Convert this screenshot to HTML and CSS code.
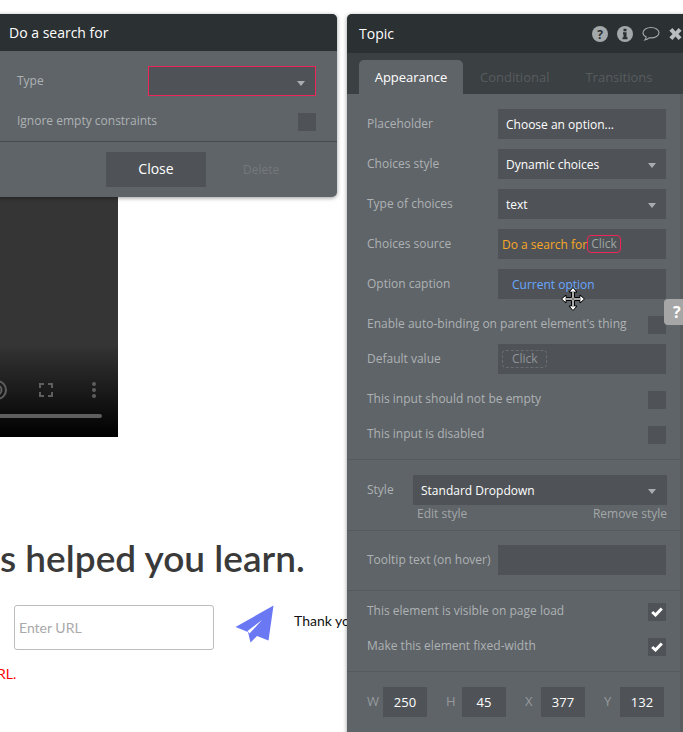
FILE: index.html
```html
<!DOCTYPE html>
<html lang="en">
<head>
<meta charset="utf-8">
<title>Topic</title>
<link rel="stylesheet" href="styles.css">
</head>
<body>
<div class="desktop">
  <div class="video">
    <div class="video-fade"></div>
    <svg class="video-controls" width="118" height="40" viewBox="0 0 118 40">
      <g fill="none" stroke="#5e5e5e">
        <circle cx="-3" cy="10" r="9" stroke-width="2"/>
        <circle cx="-3" cy="10" r="4.500" stroke-width="2"/>
        <path stroke-width="2" d="M40 8V4h4M48 4h4v4M52 12v4h-4M44 16h-4v-4"/>
      </g>
      <g fill="#5e5e5e">
        <circle cx="94" cy="4" r="2"/><circle cx="94" cy="10" r="2"/><circle cx="94" cy="16" r="2"/>
        <rect x="-4" y="34" width="106" height="4" rx="2"/>
      </g>
    </svg>
  </div>
  <h1 class="headline">s helped you learn.</h1>
  <input class="url-input" type="text" placeholder="Enter URL">
  <svg class="plane" width="40" height="40" viewBox="0 0 40 40">
    <path fill="#6a78f4" d="M38.500.5 33.500 35.500 22 31 15.500 37.500 13 27 .5 22z"/>
    <path fill="#fff" d="M27 15 12.500 26 14.500 28.500z"/>
  </svg>
  <p class="thanks">Thank you</p>
  <p class="error">RL.</p>

  <section class="window window-search">
    <header class="window-head window-head-search">Do a search for</header>
    <div class="search-fields">
      <div class="row row-search">
        <span class="label">Type</span>
        <div class="field field-type field-error"><i class="caret"></i></div>
      </div>
      <div class="row row-search row-ignore">
        <span class="label label-check">Ignore empty constraints</span>
        <span class="check"></span>
      </div>
    </div>
    <div class="search-actions">
      <button class="btn-close" type="button">Close</button>
      <span class="btn-delete">Delete</span>
    </div>
  </section>

  <section class="window window-props">
    <header class="window-head window-head-props">
      <span>Topic</span>
      <div class="head-icons">
        <svg width="16" height="16" viewBox="0 0 16 16"><circle cx="8" cy="8" r="8" fill="#a3a8ab"/><text x="8" y="12.500" class="icon-glyph">?</text></svg>
        <svg width="16" height="16" viewBox="0 0 16 16"><circle cx="8" cy="8" r="8" fill="#a3a8ab"/><path fill="#2b3033" d="M6.500 2.800h3v2.400h-3zM6 6.300h3.500v5H10.500v1.900h-5v-1.900h1v-3.100h-.5z"/></svg>
        <svg width="18" height="16" viewBox="0 0 18 16"><path fill="none" stroke="#a3a8ab" stroke-width="1.100" d="M9 1.500c4.300 0 8 2.200 8 5.200s-3.700 5.200-8 5.200c-.7 0-1.300 0-1.900-.1-1.100 1.100-2.600 1.900-4.300 2.200.8-.9 1.300-1.900 1.400-3C2.300 10.100 1 8.500 1 6.700c0-3 3.700-5.200 8-5.200z"/></svg>
        <svg width="13" height="14" viewBox="0 0 13 14"><path fill="#b9bdbf" d="M3.400 1 6.500 4.400 9.600 1 12.600 3.800 9.400 7l3.200 3.200-3 2.800-3.100-3.400L3.400 13 .4 10.200 3.600 7 .4 3.800z"/></svg>
      </div>
    </header>
    <nav class="tabs">
      <span class="tab tab-active">Appearance</span>
      <span class="tab tab-cond">Conditional</span>
      <span class="tab tab-trans">Transitions</span>
    </nav>
    <div class="props-body">
      <div class="props-scroll">
        <div class="section section-main">
          <div class="row"><span class="label">Placeholder</span><div class="field">Choose an option...</div></div>
          <div class="row"><span class="label">Choices style</span><div class="field">Dynamic choices<i class="caret"></i></div></div>
          <div class="row"><span class="label">Type of choices</span><div class="field">text<i class="caret"></i></div></div>
          <div class="row"><span class="label">Choices source</span><div class="field field-dyn"><span class="dyn-orange">Do a search for</span><span class="click click-error">Click</span></div></div>
          <div class="row"><span class="label">Option caption</span><div class="field field-caption"><span class="dyn-blue">Current option</span></div></div>
          <div class="row row-check"><span class="label label-check">Enable auto-binding on parent element's thing</span><span class="check"></span></div>
          <div class="row"><span class="label">Default value</span><div class="field field-dyn"><span class="click click-dashed">Click</span></div></div>
          <div class="row row-check"><span class="label label-check">This input should not be empty</span><span class="check"></span></div>
          <div class="row row-check"><span class="label label-check">This input is disabled</span><span class="check"></span></div>
        </div>
        <div class="section section-style">
          <div class="row"><span class="label">Style</span><div class="field field-style">Standard Dropdown<i class="caret caret-style"></i></div></div>
          <div class="style-links"><span>Edit style</span><span>Remove style</span></div>
        </div>
        <div class="section section-tooltip">
          <div class="row"><span class="label">Tooltip text (on hover)</span><div class="field"></div></div>
        </div>
        <div class="section section-flags">
          <div class="row"><span class="label label-check">This element is visible on page load</span><span class="check"><svg width="12" height="10" viewBox="0 0 12 10"><path fill="none" stroke="#fff" stroke-width="3" d="M1.200 5 4.500 8 10.800 1.500"/></svg></span></div>
          <div class="row row-check"><span class="label label-check">Make this element fixed-width</span><span class="check"><svg width="12" height="10" viewBox="0 0 12 10"><path fill="none" stroke="#fff" stroke-width="3" d="M1.200 5 4.500 8 10.800 1.500"/></svg></span></div>
        </div>
        <div class="section section-geom">
          <span class="geom-label">W</span><span class="geom-value">250</span>
          <span class="geom-label">H</span><span class="geom-value">45</span>
          <span class="geom-label">X</span><span class="geom-value">377</span>
          <span class="geom-label">Y</span><span class="geom-value">132</span>
        </div>
      </div>
    </div>
  </section>

  <div class="help-tab">?</div>
  <svg class="cursor" width="24" height="24" viewBox="0 0 24 24">
    <path fill="#fff" stroke="#000" stroke-width="1" d="M12 .5 16 5H13.500V10.500H19V8L23.500 12 19 16V13.500H13.500V19H16L12 23.500 8 19H10.500V13.500H5V16L.5 12 5 8V10.500H10.500V5H8z"/>
    <path fill="none" stroke="#555" stroke-width="1" d="M12 4V20M4 12H20"/>
  </svg>
</div>
</body>
</html>
```

FILE: styles.css
```css
* { box-sizing: border-box; }
html, body { margin: 0; padding: 0; background: #fff; }
.desktop {
  position: relative;
  width: 683px;
  height: 732px;
  overflow: hidden;
  font-family: "Open Sans", sans-serif;
}
.video {
  position: absolute;
  left: 0;
  top: 190px;
  width: 118px;
  height: 247px;
  background: #353535;
  overflow: hidden;
}
.video-fade {
  position: absolute;
  left: 0;
  right: 0;
  bottom: 0;
  height: 90px;
  background: linear-gradient(#333, #000);
}
.video-controls { position: absolute; left: 0; top: 190px; }
.headline {
  position: absolute;
  left: 0;
  top: 534px;
  margin: 0;
  font: 600 37px/48px Lato, sans-serif;
  color: #3a3a3a;
  white-space: nowrap;
}
.url-input {
  position: absolute;
  left: 14px;
  top: 605px;
  width: 200px;
  height: 45px;
  padding: 0 4px;
  border: 1px solid #bdbdbd;
  border-radius: 3px;
  font: 14px Lato, sans-serif;
  background: #fff;
}
.url-input::placeholder { color: #a9a9a9; opacity: 1; }
.plane { position: absolute; left: 235px; top: 605px; }
.thanks {
  position: absolute;
  left: 294px;
  top: 612px;
  margin: 0;
  font: 14px/18px Lato, sans-serif;
  color: #111;
  white-space: nowrap;
}
.error {
  position: absolute;
  left: -3px;
  top: 665px;
  margin: 0;
  font: 14px/18px Lato, sans-serif;
  color: #f00;
}

.window {
  position: absolute;
  background: #5f6468;
  box-shadow: 0 1px 4px rgba(0, 0, 0, .4);
  border-radius: 5px;
  overflow: hidden;
}
.window-search { left: -20px; top: 14px; width: 357px; height: 183px; }
.window-props { left: 347px; top: 14px; width: 350px; height: 740px; }
.window-head {
  background: #2b3033;
  color: #fff;
  font-size: 14px;
  display: flex;
  align-items: center;
}
.window-head-search { height: 37px; padding-left: 29px; }
.window-head-props { height: 39px; padding-left: 12px; }
.head-icons {
  position: absolute;
  left: 245px;
  top: 12px;
  display: flex;
  align-items: center;
  gap: 9px;
}
.head-icons svg { display: block; }
.icon-glyph {
  font: 700 12px "Open Sans", sans-serif;
  fill: #2b3033;
  text-anchor: middle;
}

.row {
  display: flex;
  align-items: center;
  justify-content: space-between;
  font-size: 12px;
}
.label { color: #aeb2b4; white-space: nowrap; line-height: 16px; }
.label-check { padding-bottom: 2px; }
.field {
  position: relative;
  width: 168px;
  height: 30px;
  background: #4f5357;
  color: #fff;
  display: flex;
  align-items: center;
  padding-left: 8px;
  font-size: 12px;
}
.caret {
  position: absolute;
  right: 10px;
  top: 14px;
  width: 0;
  height: 0;
  border-left: 4.500px solid transparent;
  border-right: 4.500px solid transparent;
  border-top: 5px solid #a9adaf;
}
.caret-style { right: 11px; }
.check {
  width: 18px;
  height: 18px;
  background: #4f5357;
  display: flex;
  align-items: center;
  justify-content: center;
}

.search-fields { padding: 15px 21px 0 37px; height: 91px; border-bottom: 1px solid #45494c; }
.row-ignore { margin-top: 17px; }
.field-error { border: 1px solid #ee2559; }
.search-actions { display: flex; align-items: center; padding: 10px 0 0 126px; }
.btn-close {
  width: 100px;
  height: 35px;
  border: 0;
  padding: 0 0 2px;
  background: #4f5357;
  color: #fff;
  font: 14px "Open Sans", sans-serif;
}
.btn-delete { margin-left: 37px; color: #74787b; font-size: 12px; }

.tabs {
  display: flex;
  align-items: flex-end;
  height: 41px;
  background: #3b4043;
  padding-left: 12px;
  font-size: 13px;
}
.tab { height: 34px; display: flex; align-items: center; color: #585c5f; }
.tab-active {
  width: 104px;
  justify-content: center;
  background: #5f6468;
  color: #fff;
  border-radius: 5px 5px 0 0;
}
.tab-cond { margin-left: 17px; }
.tab-trans { margin-left: 36px; }

.props-body { display: flex; background: #585c5f; }
.props-scroll { width: 333px; background: #5f6468; min-height: 650px; }
.section { padding: 0 14px 0 20px; border-bottom: 1px solid #565a5d; }
.section-main { padding-top: 15px; padding-bottom: 15px; display: flex; flex-direction: column; gap: 10px; }
.row-check { margin-top: 7px; }
.dyn-orange { color: #f9a825; }
.dyn-blue { color: #69a6ff; }
.field-dyn { padding-left: 4px; }
.field-caption { padding-left: 14px; }
.click {
  color: #a0a4a6;
  padding: 0 3px;
  height: 18px;
  line-height: 16px;
  border-radius: 4px;
}
.click-error { border: 1px solid #ee2559; }
.click-dashed { border: 1px dashed #696d70; padding: 0 8px 0 9px; color: #90949a; }

.section-style { padding: 15px 13px 0 20px; height: 71px; }
.field-style { width: 254px; }
.style-links {
  display: flex;
  justify-content: space-between;
  padding-left: 50px;
  margin-top: 2px;
  font-size: 12px;
  line-height: 14px;
  color: #a3a7a9;
}
.section-tooltip { padding-top: 14px; padding-bottom: 15px; }
.section-flags { padding-top: 12px; padding-bottom: 15px; }
.section-flags .row-check { margin-top: 17px; }
.section-geom {
  display: flex;
  align-items: center;
  padding: 15px 0 0 20px;
  border-bottom: 0;
  font-size: 13px;
}
.geom-label { flex: none; color: #969a9d; width: 16px; padding-bottom: 2px; }
.geom-value {
  flex: none;
  width: 44px;
  height: 30px;
  background: #4f5357;
  color: #fff;
  display: flex;
  align-items: center;
  justify-content: center;
  margin-right: 19px;
}

.help-tab {
  position: absolute;
  left: 664px;
  top: 299px;
  width: 24px;
  height: 26px;
  border-radius: 4px;
  background: #a6a6a6;
  color: #fff;
  font: 700 16px/26px "Open Sans", sans-serif;
  padding-left: 9px;
}
.cursor { position: absolute; left: 561px; top: 287px; }
```
